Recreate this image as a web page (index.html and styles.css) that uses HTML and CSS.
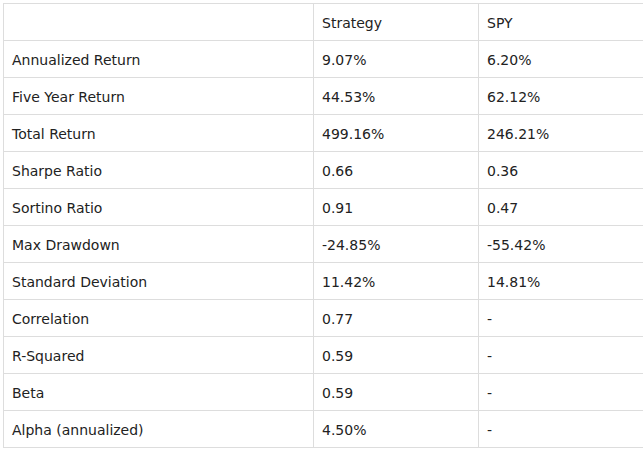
FILE: index.html
```html
<!DOCTYPE html>
<html>
<head>
<meta charset="utf-8">
<link rel="stylesheet" href="styles.css">
</head>
<body>
<table class="stats">
<colgroup><col class="c1"><col class="c2"><col class="c3"></colgroup>
<tr><td></td><td>Strategy</td><td>SPY</td></tr>
<tr><td>Annualized Return</td><td>9.07%</td><td>6.20%</td></tr>
<tr><td>Five Year Return</td><td>44.53%</td><td>62.12%</td></tr>
<tr><td>Total Return</td><td>499.16%</td><td>246.21%</td></tr>
<tr><td>Sharpe Ratio</td><td>0.66</td><td>0.36</td></tr>
<tr><td>Sortino Ratio</td><td>0.91</td><td>0.47</td></tr>
<tr><td>Max Drawdown</td><td>-24.85%</td><td>-55.42%</td></tr>
<tr><td>Standard Deviation</td><td>11.42%</td><td>14.81%</td></tr>
<tr><td>Correlation</td><td>0.77</td><td>-</td></tr>
<tr><td>R-Squared</td><td>0.59</td><td>-</td></tr>
<tr><td>Beta</td><td>0.59</td><td>-</td></tr>
<tr><td>Alpha (annualized)</td><td>4.50%</td><td>-</td></tr>
</table>
</body>
</html>
```
FILE: styles.css
```css
html, body {
  margin: 0;
  padding: 0;
  background: #fff;
}
body {
  padding: 3px 0 0 3px;
  font-family: "DejaVu Sans", Verdana, sans-serif;
  font-size: 14px;
  color: #222;
}
.stats {
  border-collapse: collapse;
  width: 640px;
  table-layout: fixed;
}
.c1 { width: 310px; }
.c2 { width: 165px; }
.c3 { width: 165px; }
.stats td {
  border: 1px solid #ddd;
  height: 37px;
  padding: 1px 8px 0 8px;
  box-sizing: border-box;
  vertical-align: middle;
  line-height: 16px;
}
.stats tr {
  height: 37px;
}
```
